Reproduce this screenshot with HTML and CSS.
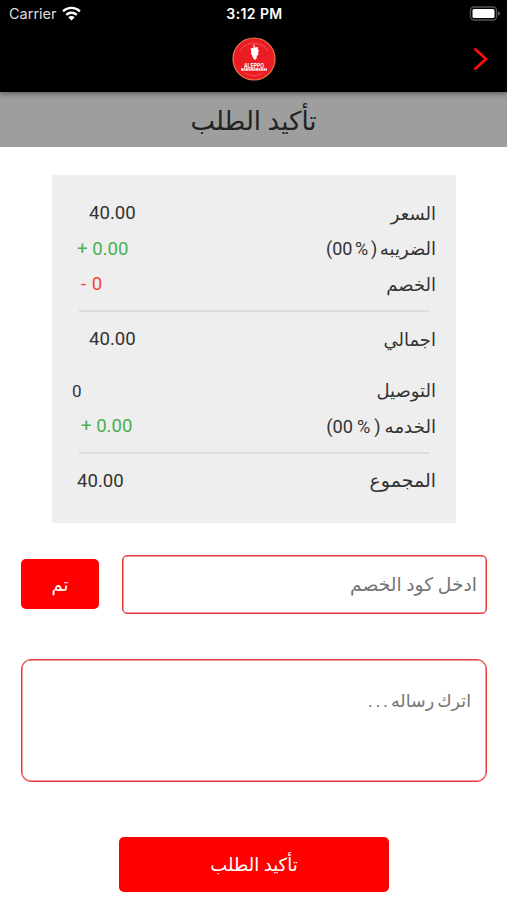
FILE: index.html
```
<!DOCTYPE html>
<html lang="ar" dir="rtl">

<head>
    <meta charset="UTF-8">
    <meta name="viewport" content="width=device-width, initial-scale=1.0">
    <title>تأكيد الطلب</title>
    <link rel="stylesheet" href="styles.css">
</head>

<body>

    <div class="top">
        <div class="status" dir="ltr">
            <div class="carrier">
                <span>Carrier</span>
                <svg width="19" height="15" viewBox="0 0 19 15">
                    <g fill="none" stroke="#fff" stroke-width="2.3">
                        <path d="M1.1 5.4a12 12 0 0 1 16.8 0" />
                        <path d="M4.2 8.9a7.6 7.6 0 0 1 10.6 0" />
                    </g>
                    <path fill="#fff" d="M9.5 14.4L6.3 11.3a4.6 4.6 0 0 1 6.4 0z" />
                </svg>
            </div>
            <div class="time">3:12 PM</div>
            <svg class="battery" width="31" height="16" viewBox="0 0 31 16">
                <rect x="1.5" y="1" width="26" height="13" rx="3.5" fill="none" stroke="#555" stroke-width="1.3" />
                <rect x="3.5" y="3" width="22" height="9" rx="1.5" fill="#fff" />
                <path d="M29 5.2q2 1 2 2.3t-2 2.3z" fill="#666" />
            </svg>
        </div>

        <div class="bar" dir="ltr">
            <svg class="logo" width="44" height="44" viewBox="0 0 44 44">
                <circle cx="22" cy="22" r="21" fill="#ec1c24" stroke="#e8784f" stroke-width="1.2" />
                <path d="M8 14a16.5 16.5 0 0 1 28 0M13 36a17 17 0 0 0 18 0" fill="none" stroke="#f48a86" stroke-width=".8" stroke-dasharray="1.3 .8" />
                <path fill="#fff" d="M21.5 7.5h1v3l3.5-.5-.3 2.2 1.2 1-.8 2.3.3 2-1.5 1.5-.3 2.5-1.8 1.5-2-2.3-.6-2.2-1.4-2 .7-1.5-1-3.5 3-.8z" />
                <text x="22" y="30.5" textLength="20" lengthAdjust="spacingAndGlyphs">ALEPPO</text>
                <path d="M9 32.5h26" stroke="#fff" stroke-width="2.3" stroke-dasharray="2.2 .3" opacity=".85" />
            </svg>
            <svg class="arrow" width="15" height="24" viewBox="0 0 15 24">
                <path d="M1.5 1.5L13 12L1.5 22.5" fill="none" stroke="#fb0d0d" stroke-width="2.8" />
            </svg>
        </div>
    </div>

    <h1 class="title"><span>تأكيد الطلب</span></h1>

    <div class="bill">
        <div class="row"><span>السعر</span><span class="num in3">40.00</span></div>
        <div class="row"><span class="tax">الضريبه ( % 00)</span><span class="num in1 plus">+ 0.00</span></div>
        <div class="row"><span>الخصم</span><span class="num in2 minus">- 0</span></div>
        <div class="line"></div>
        <div class="row total"><span>اجمالي</span><span class="num in3">40.00</span></div>
        <div class="row"><span>التوصيل</span><span class="num small">0</span></div>
        <div class="row"><span class="service">الخدمه ( % 00)</span><span class="num in2 plus">+ 0.00</span></div>
        <div class="line"></div>
        <div class="row"><span class="sum">المجموع</span><span class="num in1">40.00</span></div>
    </div>

    <div class="coupon">
        <input type="text" placeholder="ادخل كود الخصم">
        <button>تم</button>
    </div>

    <textarea class="message" placeholder="اترك رساله . . ."></textarea>

    <button class="confirm">تأكيد الطلب</button>

</body>

</html>
```
FILE: styles.css
```
* {
    box-sizing: border-box;
}

html,
body {
    margin: 0;
    height: 900px;
    overflow: hidden;
    background-color: #fff;
}

body,
input,
textarea,
button {
    font-family: Roboto, "DejaVu Sans", sans-serif;
    font-size: 18px;
}

.top {
    position: relative;
    height: 92px;
    background-color: #000;
    box-shadow: 0 2px 5px rgba(0, 0, 0, 0.4);
}

.status {
    display: grid;
    grid-template-columns: 1fr auto 1fr;
    align-items: center;
    height: 27px;
    padding: 0 7px 0 9px;
    color: #ddd;
    font-family: Inter, sans-serif;
    font-size: 14px;
}

.carrier {
    display: flex;
    align-items: center;
    gap: 5px;
    font-size: 14.5px;
}

.time {
    color: #fff;
    font-weight: 600;
    letter-spacing: 0.4px;
}

.battery {
    justify-self: end;
}

.bar {
    display: grid;
    grid-template-columns: 1fr 44px 1fr;
    align-items: center;
    height: 64px;
    padding: 0 19px;
}

.logo {
    grid-column: 2;
}

.logo text {
    font-family: "Liberation Sans", sans-serif;
    font-size: 8px;
    font-weight: bold;
    text-anchor: middle;
    fill: #fff;
}

.arrow {
    justify-self: end;
}

.title {
    display: flex;
    justify-content: center;
    align-items: center;
    height: 55px;
    margin: 0;
    padding-top: 2px;
    background-color: #9e9e9e;
    color: #222;
    font-size: 26px;
    font-weight: normal;
}

.bill {
    width: 404px;
    height: 348px;
    margin: 28px 51px 0 0;
    padding: 20px 20px 0;
    background-color: #eee;
    color: #333;
}

.row {
    display: flex;
    justify-content: space-between;
    align-items: center;
    height: 35.6px;
    padding-top: 1px;
}

.total {
    margin-bottom: 16px;
}

.tax {
    word-spacing: -1.8px;
}

.service {
    word-spacing: -0.5px;
    font-size: 18.2px;
}

.sum {
    font-size: 19px;
}

.num {
    direction: ltr;
    font-size: 18.6px;
}

.small {
    font-size: 17px;
}

.in1 {
    margin-left: 5px;
}

.in2 {
    margin-left: 9px;
}

.in3 {
    margin-left: 17px;
}

.plus {
    color: #4caf50;
}

.minus {
    color: #f44336;
    word-spacing: 1px;
}

.line {
    height: 2px;
    margin: 8px 7px 9px;
    background-color: #dcdcdc;
}

.coupon {
    display: flex;
    justify-content: space-between;
    align-items: center;
    margin: 32px 20px 0 21px;
}

.coupon input {
    width: 365px;
    height: 59px;
    padding: 0 9px;
    font-size: 18.7px;
}

.coupon input,
.message {
    border: 1px solid #e53935;
    border-radius: 5px;
    box-shadow: inset 0 0 0 0.5px #e53935;
    outline: none;
}

button {
    border: none;
    border-radius: 5px;
    background-color: #f00;
    color: #fff;
}

.coupon button {
    width: 78px;
    height: 50px;
    margin-bottom: 1px;
}

::placeholder {
    color: #757575;
    opacity: 1;
}

.message {
    display: block;
    width: 466px;
    height: 123px;
    margin: 45px 20px 0 21px;
    padding: 31px 15px;
    border-radius: 10px;
    font-size: 17.5px;
    word-spacing: -1.3px;
    resize: none;
}

.confirm {
    display: block;
    width: 270px;
    height: 55px;
    margin: 55px 118px 0 0;
}
```
